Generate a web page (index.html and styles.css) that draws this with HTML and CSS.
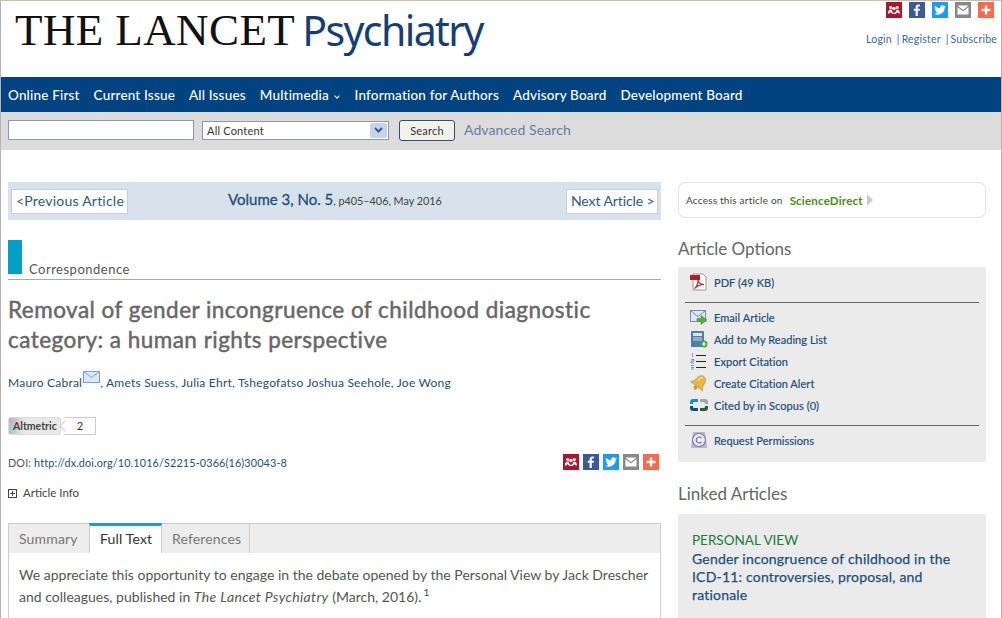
FILE: index.html
```html
<!DOCTYPE html>
<html lang="en">
<head>
<meta charset="utf-8">
<title>The Lancet Psychiatry</title>
<link rel="stylesheet" href="styles.css">
</head>
<body>
<svg class="defs" width="0" height="0" aria-hidden="true">
  <symbol id="i-mend" viewBox="0 0 16 16"><rect width="16" height="16" fill="#a6192e"/><g fill="#fff"><circle cx="8" cy="6.500" r="1.700"/><circle cx="4.700" cy="5.500" r="1.500"/><circle cx="11.300" cy="5.500" r="1.500"/><path d="M2 11c0-2 1-3.500 2.700-3.500S6 9 6.500 10c.4.800 1 .8 1.500.8s1.100 0 1.500-.8c.5-1 1-2.500 1.800-2.500S14 9 14 11c0 .8-1.500.8-1.800 0-.3-.8-.6-1-1-.5-.5.800-1.700 1.500-3.200 1.500s-2.700-.7-3.200-1.500c-.4-.5-.7-.3-1 .5-.3.800-1.800.8-1.800 0z"/></g></symbol>
  <symbol id="i-fb" viewBox="0 0 16 16"><rect width="16" height="16" fill="#3b5998"/><path fill="#fff" d="M8.800 14V8.800h1.800l.3-2.100H8.800V5.500c0-.6.2-1 1-1h1.100V2.700c-.2 0-.9-.1-1.600-.1-1.600 0-2.700 1-2.700 2.700v1.400H4.800v2.100h1.800V14z"/></symbol>
  <symbol id="i-tw" viewBox="0 0 16 16"><rect width="16" height="16" fill="#1d9bf0"/><path fill="#fff" d="M14 4.300c-.5.200-.9.300-1.400.4.500-.3.900-.8 1.100-1.300-.5.300-1 .5-1.500.6a2.400 2.400 0 0 0-4.100 2.200C6.100 6.100 4.300 5.100 3.100 3.700c-.7 1.100-.3 2.500.7 3.200-.4 0-.8-.1-1.100-.3 0 1.200.8 2.200 1.900 2.400-.4.100-.7.100-1.100 0 .3 1 1.200 1.600 2.200 1.700A4.900 4.900 0 0 1 2 11.700a6.900 6.900 0 0 0 10.600-6.100c.6-.3 1-.8 1.400-1.300z"/></symbol>
  <symbol id="i-mail" viewBox="0 0 16 16"><rect width="16" height="16" fill="#888"/><path fill="#fff" d="M2.500 3.500h11L8 8zM2.500 5l5.500 4.500L13.500 5v7.500h-11z"/></symbol>
  <symbol id="i-plus" viewBox="0 0 16 16"><rect width="16" height="16" fill="#f8694d"/><path fill="#fff" d="M6.800 3.500h2.400v3.300h3.300v2.400H9.200v3.300H6.800V9.200H3.500V6.800h3.300z"/></symbol>
</svg>

<div class="page">
  <header class="masthead">
    <div class="logo"><span class="logo-lancet">THE LANCET</span> <span class="logo-psych">Psychiatry</span></div>
    <div class="utility">
      <div class="share share-top">
        <svg class="share-icon"><use href="#i-mend"/></svg>
        <svg class="share-icon"><use href="#i-fb"/></svg>
        <svg class="share-icon"><use href="#i-tw"/></svg>
        <svg class="share-icon"><use href="#i-mail"/></svg>
        <svg class="share-icon"><use href="#i-plus"/></svg>
      </div>
      <div class="account"><a>Login</a><span class="sep">|</span><a>Register</a><span class="sep">|</span><a>Subscribe</a></div>
    </div>
  </header>

  <nav class="mainnav">
    <a>Online First</a><a>Current Issue</a><a>All Issues</a><a>Multimedia <span class="caret"></span></a><a>Information for Authors</a><a>Advisory Board</a><a>Development Board</a>
  </nav>

  <div class="searchbar">
    <div class="search-input"></div>
    <div class="search-select"><span>All Content</span>
      <span class="select-arrow"><svg width="9" height="6" viewBox="0 0 9 6"><path d="M1 1l3.500 3.500L8 1" fill="none" stroke="#3a5a8c" stroke-width="2"/></svg></span>
    </div>
    <div class="search-btn">Search</div>
    <a class="advanced">Advanced Search</a>
  </div>

  <div class="content">
    <main class="article">
      <div class="issuebar">
        <a class="pager pager-prev">&lt;Previous Article</a>
        <div class="issue"><a class="volume">Volume 3, No. 5</a><span class="issue-rest">, p405–406, May 2016</span></div>
        <a class="pager pager-next">Next Article &gt;</a>
      </div>

      <div class="kind"><span class="kind-block"></span><span class="kind-label">Correspondence</span></div>

      <h1 class="title">Removal of gender incongruence of childhood diagnostic category: a human rights perspective</h1>

      <div class="authors"><a>Mauro Cabral</a><svg class="author-mail" width="17" height="12" viewBox="0 0 17 12"><rect x=".5" y=".5" width="16" height="11" fill="#dbe8f6" stroke="#7d9fd0"/><path d="M.5.500l8 6 8-6" fill="none" stroke="#7d9fd0"/></svg>, <a>Amets Suess</a>, <a>Julia Ehrt</a>, <a>Tshegofatso Joshua Seehole</a>, <a>Joe Wong</a></div>

      <div class="altmetric"><span class="alt-badge">Altmetric</span><span class="alt-count">2</span></div>

      <div class="doi-row">
        <div class="doi">DOI: <a>http://dx.doi.org/10.1016/S2215-0366(16)30043-8</a></div>
        <div class="share">
          <svg class="share-icon"><use href="#i-mend"/></svg>
          <svg class="share-icon"><use href="#i-fb"/></svg>
          <svg class="share-icon"><use href="#i-tw"/></svg>
          <svg class="share-icon"><use href="#i-mail"/></svg>
          <svg class="share-icon"><use href="#i-plus"/></svg>
        </div>
      </div>

      <div class="info"><span class="plusbox"></span>Article Info</div>

      <section class="tabs">
        <div class="tablist"><span class="tab tab-summary">Summary</span><span class="tab tab-active">Full Text</span><span class="tab tab-last">References</span></div>
        <p class="body">We appreciate this opportunity to engage in the debate opened by the Personal View by Jack Drescher and colleagues, published in <em>The Lancet Psychiatry</em> (March, 2016).<sup>1</sup></p>
      </section>
    </main>

    <aside class="side">
      <div class="access"><span class="access-text">Access this article on</span><span class="sd">ScienceDirect</span><span class="sd-arrow"></span></div>

      <h2 class="side-h">Article Options</h2>
      <div class="options">
        <div class="opt-group">
          <a class="opt"><svg class="opt-icon" viewBox="0 0 18 18"><path d="M3 1h10l3 3v13H3z" fill="#fff" stroke="#999"/><rect x="0" y="2" width="10" height="5" fill="#b11f24"/><path d="M4.500 15.500c2-1 4-6 3.500-9.500 0 3.500 2.500 5.500 6 5.500-3.500 0-6.500 1-9.500 4z" fill="none" stroke="#c8232a" stroke-width="1.200"/></svg>PDF (49 KB)</a>
        </div>
        <div class="opt-group">
          <a class="opt"><svg class="opt-icon" viewBox="0 0 18 18"><rect x=".5" y="2.500" width="15" height="11" fill="#dce9f6" stroke="#6d8fbd"/><path d="M.5 2.500l7.500 6 7.500-6" fill="none" stroke="#6d8fbd"/><path d="M7 10.500h4V7.500l6 4.500-6 4.500v-3H7z" fill="#5aaa3c" stroke="#3d8227" stroke-width=".5"/></svg>Email Article</a>
          <a class="opt"><svg class="opt-icon" viewBox="0 0 18 18"><rect x="1" y="1" width="13" height="16" rx="1" fill="#4d7fa8"/><rect x="3" y="3" width="9" height="3" fill="#d6e6f2"/><path d="M3 8h9M3 10h9" stroke="#cfe0ee"/><circle cx="14" cy="14" r="3.500" fill="#4ea24a"/><path d="M12 14h4M14 12v4" stroke="#fff" stroke-width="1.200"/></svg>Add to My Reading List</a>
          <a class="opt"><svg class="opt-icon" viewBox="0 0 18 18"><path d="M6 3.500h10M6 9.500h10M6 15.500h10" stroke="#222" stroke-width="1"/><path d="M2.500 1v4M1 7.500h3v1.500H1v2h3M1 13.500h3M1 15.500h3M1 17h3" stroke="#6b8cc0" fill="none" stroke-width=".9"/></svg>Export Citation</a>
          <a class="opt"><svg class="opt-icon" viewBox="0 0 18 18"><g transform="rotate(38 9 9)"><path d="M9 1c3.200 0 4.800 2.700 4.800 6.200 0 2.800 1.200 4 2.700 5.800h-15c1.500-1.800 2.700-3 2.700-5.800C4.200 3.700 5.800 1 9 1z" fill="#e6b84a" stroke="#b98a26" stroke-width=".6"/><path d="M9 2.500c-1.500.5-2.500 2-2.500 5" fill="none" stroke="#f7e3a4" stroke-width="1.200"/><circle cx="9" cy="14.800" r="2" fill="#c99a30"/></g></svg>Create Citation Alert</a>
          <a class="opt"><svg class="opt-icon opt-wide" viewBox="0 0 20 14"><path d="M1 6V4c0-2 1-3 3-3h5v3H5C4 4 4 5 4 6z" fill="#1b8fc4"/><path d="M11 1h5c2 0 3 1 3 3v2h-3c0-1 0-2-1-2h-4z" fill="#9aa7b3"/><path d="M1 8h3c0 1 0 2 1 2h4v3H4c-2 0-3-1-3-3z" fill="#13507f"/><path d="M16 8h3v2c0 2-1 3-3 3h-5v-3h4c1 0 1-1 1-2z" fill="#2c5b43"/></svg>Cited by in Scopus (0)</a>
        </div>
        <div class="opt-group">
          <a class="opt"><svg class="opt-icon" viewBox="0 0 18 18"><path d="M3 1h12l2 16H1z" fill="#b9b4d4"/><circle cx="9" cy="9" r="6.500" fill="#eee" stroke="#7f78a8" stroke-width="1.200"/><path d="M11.500 7a3 3 0 1 0 0 4" fill="none" stroke="#6d669a" stroke-width="1.200"/></svg>Request Permissions</a>
        </div>
      </div>

      <h2 class="side-h side-h-linked">Linked Articles</h2>
      <div class="linked">
        <div class="linked-kind">PERSONAL VIEW</div>
        <a class="linked-title">Gender incongruence of childhood in the ICD-11: controversies, proposal, and rationale</a>
      </div>
    </aside>
  </div>
</div>
</body>
</html>
```

FILE: styles.css
```css
* { box-sizing: border-box; }
html, body { margin: 0; padding: 0; height: 618px; overflow: hidden; background: #fff; }
body { font-family: "Lato", "Noto Sans", sans-serif; color: #555; }
a { color: #1d4f7c; text-decoration: none; }
.defs { display: block; position: absolute; }

.page {
  width: 1002px;
  height: 618px;
  overflow: hidden;
  border-top: 1px solid #c9c0b0;
  border-left: 1px solid #b5b5b5;
  border-right: 1px solid #b5b5b5;
}

.masthead { height: 76px; display: flex; justify-content: space-between; padding: 0 4px 0 14px; }
.logo { white-space: nowrap; line-height: 58px; height: 70px; }
.logo-lancet { font-family: "Liberation Serif", serif; font-size: 45px; letter-spacing: .4px; color: #111; }
.logo-psych { font-family: "Noto Sans", sans-serif; font-size: 41px; letter-spacing: -1.600px; color: #153f74; margin-left: 3px; vertical-align: -1px; }
.utility { display: flex; flex-direction: column; align-items: flex-end; padding-top: 1px; }
.share { display: flex; gap: 4px; }
.share-top { gap: 7px; padding-right: 3px; }
.share-icon { width: 16px; height: 16px; display: block; }
.account { margin-top: 14px; font-size: 10.500px; letter-spacing: .2px; line-height: 14px; white-space: nowrap; }
.account a { color: #3a6a94; }
.sep { margin: 0 2px 0 5px; color: #3a6a94; }

.mainnav { height: 35px; background: #004380; display: flex; align-items: center; padding: 0 7px; gap: 14px; }
.mainnav a { color: #fff; font-size: 13.500px; font-weight: 500; letter-spacing: .18px; white-space: nowrap; }
.caret { display: inline-block; width: 4px; height: 4px; margin: 0 2px 2px 2px; border-right: 1px solid #fff; border-bottom: 1px solid #fff; transform: rotate(45deg); }

.searchbar { height: 38px; background: #dcdcdc; display: flex; align-items: center; padding: 0 7px 2px; }
.search-input { width: 186px; height: 20px; background: #fff; border: 1px solid #8a9aae; }
.search-select { width: 187px; height: 19px; margin-left: 8px; background: #fff; border: 1px solid #8a9aae; display: flex; align-items: center; justify-content: space-between; padding: 0 1px 0 4px; font-size: 11px; color: #333; letter-spacing: .2px; }
.select-arrow { width: 17px; height: 15px; background: #c5d3ec; border-radius: 2px; display: flex; align-items: center; justify-content: center; }
.search-btn { width: 56px; height: 21px; margin-left: 10px; border: 1px solid #2f4f6f; border-radius: 3px; background: #f3f1ec; font-size: 11px; color: #333; letter-spacing: .2px; text-align: center; line-height: 19px; }
.advanced { margin: 0 0 2px 9px; font-size: 14px; letter-spacing: .08px; color: #5f81a6; }

.content { display: flex; padding: 32px 0 0 7px; }
.article { width: 653px; flex: none; }
.side { width: 308px; flex: none; margin-left: 17px; }

.issuebar { height: 38px; background: #d8e2ec; display: flex; align-items: center; padding: 0 3px; }
.pager { background: #fff; border: 1px solid #c6d0da; height: 25px; line-height: 21px; padding: 0 4px; font-size: 14px; white-space: nowrap; color: #2a5a86; flex: none; }
.pager-prev { width: 117px; letter-spacing: .22px; }
.pager-next { width: 92px; letter-spacing: -.1px; margin-left: auto; }
.issue { white-space: nowrap; color: #333; margin-left: 100px; line-height: 20px; padding-bottom: 2px; }
.volume { font-size: 15px; color: #1d4f7c; -webkit-text-stroke: .3px #1d4f7c; }
.issue-rest { font-size: 10.800px; color: #444; }

.kind { height: 40px; margin-top: 20px; border-bottom: 1px solid #aaa; display: flex; align-items: flex-start; }
.kind-block { width: 14px; height: 34px; background: #00a0c6; }
.kind-label { margin: 20px 0 0 7px; font-size: 13px; line-height: 18px; color: #555; letter-spacing: .5px; }

.title { margin: 15px 0 0; font-size: 22.500px; line-height: 30px; font-weight: 400; -webkit-text-stroke: .45px #666; color: #666; letter-spacing: .47px; }
.authors { margin-top: 16px; height: 20px; font-size: 12px; line-height: 16px; color: #1d4f7c; white-space: nowrap; letter-spacing: .23px; }
.author-mail { vertical-align: 4px; margin-left: 1px; }

.altmetric { margin-top: 26px; display: flex; align-items: center; height: 18px; }
.alt-badge { width: 53px; height: 18px; background-image: linear-gradient(90deg, transparent, #e9e9e9 16px), conic-gradient(at 10px 9px, #dc9a94, #ead79a, #a7cfae, #a5bede, #dc9a94); border: 1px solid #ddd; border-radius: 2px; font-size: 10.500px; line-height: 16px; font-weight: 700; color: #444; padding-left: 4px; }
.alt-count { position: relative; width: 32px; height: 18px; margin-left: 3px; border: 1px solid #ccc; border-left-color: transparent; font-size: 11px; line-height: 16px; text-align: center; color: #333; }
.alt-count::before { content: ""; position: absolute; left: -4px; top: 4px; width: 7px; height: 7px; border-left: 1px solid #ccc; border-bottom: 1px solid #ccc; background: #fff; transform: rotate(45deg); }

.doi-row { margin-top: 17px; display: flex; justify-content: space-between; align-items: center; height: 20px; padding-right: 2px; }
.doi { font-size: 10.800px; color: #555; letter-spacing: .15px; padding-top: 1px; }

.info { margin-top: 14px; font-size: 11.500px; line-height: 14px; color: #444; display: flex; align-items: center; }
.plusbox { width: 9px; height: 9px; margin-right: 6px; border: 1px solid #444; background: linear-gradient(#444, #444) center / 5px 1px no-repeat, linear-gradient(#444, #444) center / 1px 5px no-repeat; }

.tabs { margin-top: 23px; border: 1px solid #ccc; height: 110px; }
.tablist { height: 29px; background: #ededed; display: flex; }
.tab { font-size: 14px; line-height: 30px; color: #777; letter-spacing: .15px; padding-left: 10px; }
.tab-summary { width: 80px; }
.tab-active { width: 73px; height: 30px; background: #fff; color: #333; border-top: 3px solid #1a9fc0; border-left: 1px solid #ccc; border-right: 1px solid #ccc; line-height: 25px; margin-top: -1px; }
.tab-last { width: 88px; border-right: 1px solid #ccc; }
.body { margin: 11px 9px 0 10px; font-size: 14px; line-height: 22px; color: #555; letter-spacing: .01px; }
.body em { letter-spacing: .35px; }
.body sup { font-size: 10px; color: #1d4f7c; line-height: 0; margin-left: 2px; }

.access { height: 36px; border: 1px solid #e4e4e4; border-radius: 8px; display: flex; align-items: center; padding: 0 7px; }
.access-text { font-size: 10px; color: #444; letter-spacing: .22px; }
.sd { margin-left: 7px; font-size: 11.500px; font-weight: 700; color: #4d8a12; letter-spacing: .2px; }
.sd-arrow { margin-left: 4px; border-left: 6px solid #ccc; border-top: 6px solid transparent; border-bottom: 6px solid transparent; }

.side-h { margin: 20px 0 0; font-size: 17px; line-height: 22px; font-weight: 400; color: #666; }
.side-h-linked { margin-top: 21px; }

.options { margin-top: 7px; height: 195px; background: #ebebeb; padding: 0 7px; }
.opt-group { padding: 3px 0 9px; border-bottom: 1px solid #666; }
.opt-group:first-child { padding-top: 4px; }
.opt-group:last-child { border-bottom: 0; }
.opt { display: flex; align-items: center; height: 22px; font-size: 11px; color: #1d4f7c; -webkit-text-stroke: .2px #1d4f7c; letter-spacing: .05px; white-space: nowrap; }
.opt-icon { width: 18px; height: 18px; margin: 0 6px 0 5px; flex: none; }
.opt-wide { width: 20px; height: 14px; margin: 0 5px 0 4px; }

.linked { margin-top: 9px; height: 120px; background: #ebebeb; padding: 17px 14px; }
.linked-kind { font-size: 13.500px; line-height: 18px; color: #1d7a3a; margin-bottom: 1px; }
.linked-title { display: block; font-size: 14px; line-height: 18px; -webkit-text-stroke: .25px #1d4f7c; letter-spacing: .2px; color: #1d4f7c; }
```
